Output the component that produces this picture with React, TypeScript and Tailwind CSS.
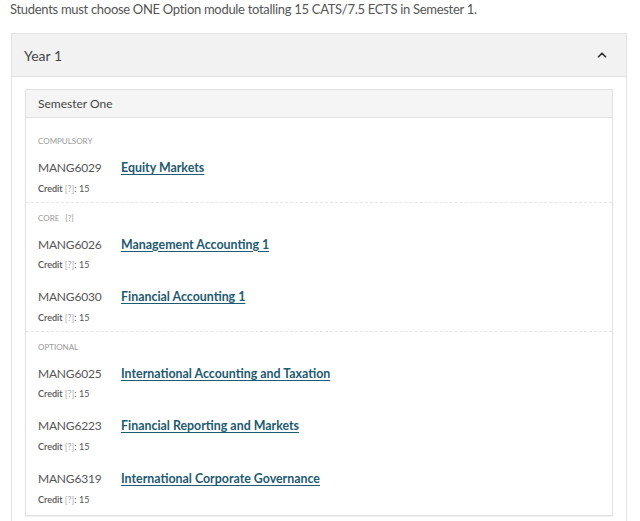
import { ChevronUp } from "lucide-react";

type Module = { code: string; title: string };

const sections: { label: string; hint?: boolean; modules: Module[] }[] = [
  {
    label: "COMPULSORY",
    modules: [{ code: "MANG6029", title: "Equity Markets" }],
  },
  {
    label: "CORE",
    hint: true,
    modules: [
      { code: "MANG6026", title: "Management Accounting 1" },
      { code: "MANG6030", title: "Financial Accounting 1" },
    ],
  },
  {
    label: "OPTIONAL",
    modules: [
      { code: "MANG6025", title: "International Accounting and Taxation" },
      { code: "MANG6223", title: "Financial Reporting and Markets" },
      { code: "MANG6319", title: "International Corporate Governance" },
    ],
  },
];

const ModuleRow = ({ module }: { module: Module }) => (
  <div className="pt-[10px] pb-[7px]">
    <div className="flex items-baseline">
      <span className="w-[83px] shrink-0 text-[12px] tracking-[-0.2px] text-[#555]">
        {module.code}
      </span>
      <a
        href="#"
        className="text-[12.4px] font-bold text-[#1e5a70] underline underline-offset-2"
      >
        {module.title}
      </a>
    </div>
    <div className="mt-[5px] text-[9px] leading-[12px] text-[#555]">
      <span className="font-semibold">Credit</span>{" "}
      <span className="text-[#aaa]">[?]</span>: 15
    </div>
  </div>
);

export default function App() {
  return (
    <div className="bg-white min-h-[521px] font-['Lato',sans-serif] text-[#555]">
      <p className="px-[10px] text-[13px] leading-[18px] tracking-[-0.3px] text-[#555]">
        Students must choose ONE Option module totalling 15 CATS/7.5 ECTS in Semester 1.
      </p>
      <div className="mx-[11px] mt-[15px] w-[616px] border border-b-0 border-[#e2e2e2]">
        <div className="flex h-[43px] items-center justify-between border-b border-[#e2e2e2] bg-[#f2f2f2] pl-[12px] pr-[17px]">
          <span className="text-[14px] text-[#444]">Year 1</span>
          <ChevronUp size={14} strokeWidth={3} className="text-[#333]" />
        </div>
        <div className="px-[13px] pt-[12px] pb-[8px]">
          <div className="border border-[#e2e2e2] shadow-[0_1px_1px_rgba(0,0,0,0.06)]">
            <div className="flex h-[28px] items-center border-b border-[#e2e2e2] bg-[#f5f5f5] px-[12px] text-[12px] text-[#444]">
              Semester One
            </div>
            {sections.map((s, i) => (
              <div
                key={s.label}
                className={
                  i === 0
                    ? "border-b border-dashed border-[#e6e6e6] px-[12px] pt-[18px]"
                    : i < sections.length - 1
                      ? "border-b border-dashed border-[#e6e6e6] px-[12px] pt-[10px]"
                      : "px-[12px] pt-[10px] pb-[2px]"
                }
              >
                <div className="text-[8px] leading-[10px] text-[#999]">
                  {s.label}
                  {s.hint && <span className="ml-[6px]">[?]</span>}
                </div>
                <div className="pt-[3px]">
                  {s.modules.map((m) => (
                    <ModuleRow key={m.code} module={m} />
                  ))}
                </div>
              </div>
            ))}
          </div>
        </div>
      </div>
    </div>
  );
}
